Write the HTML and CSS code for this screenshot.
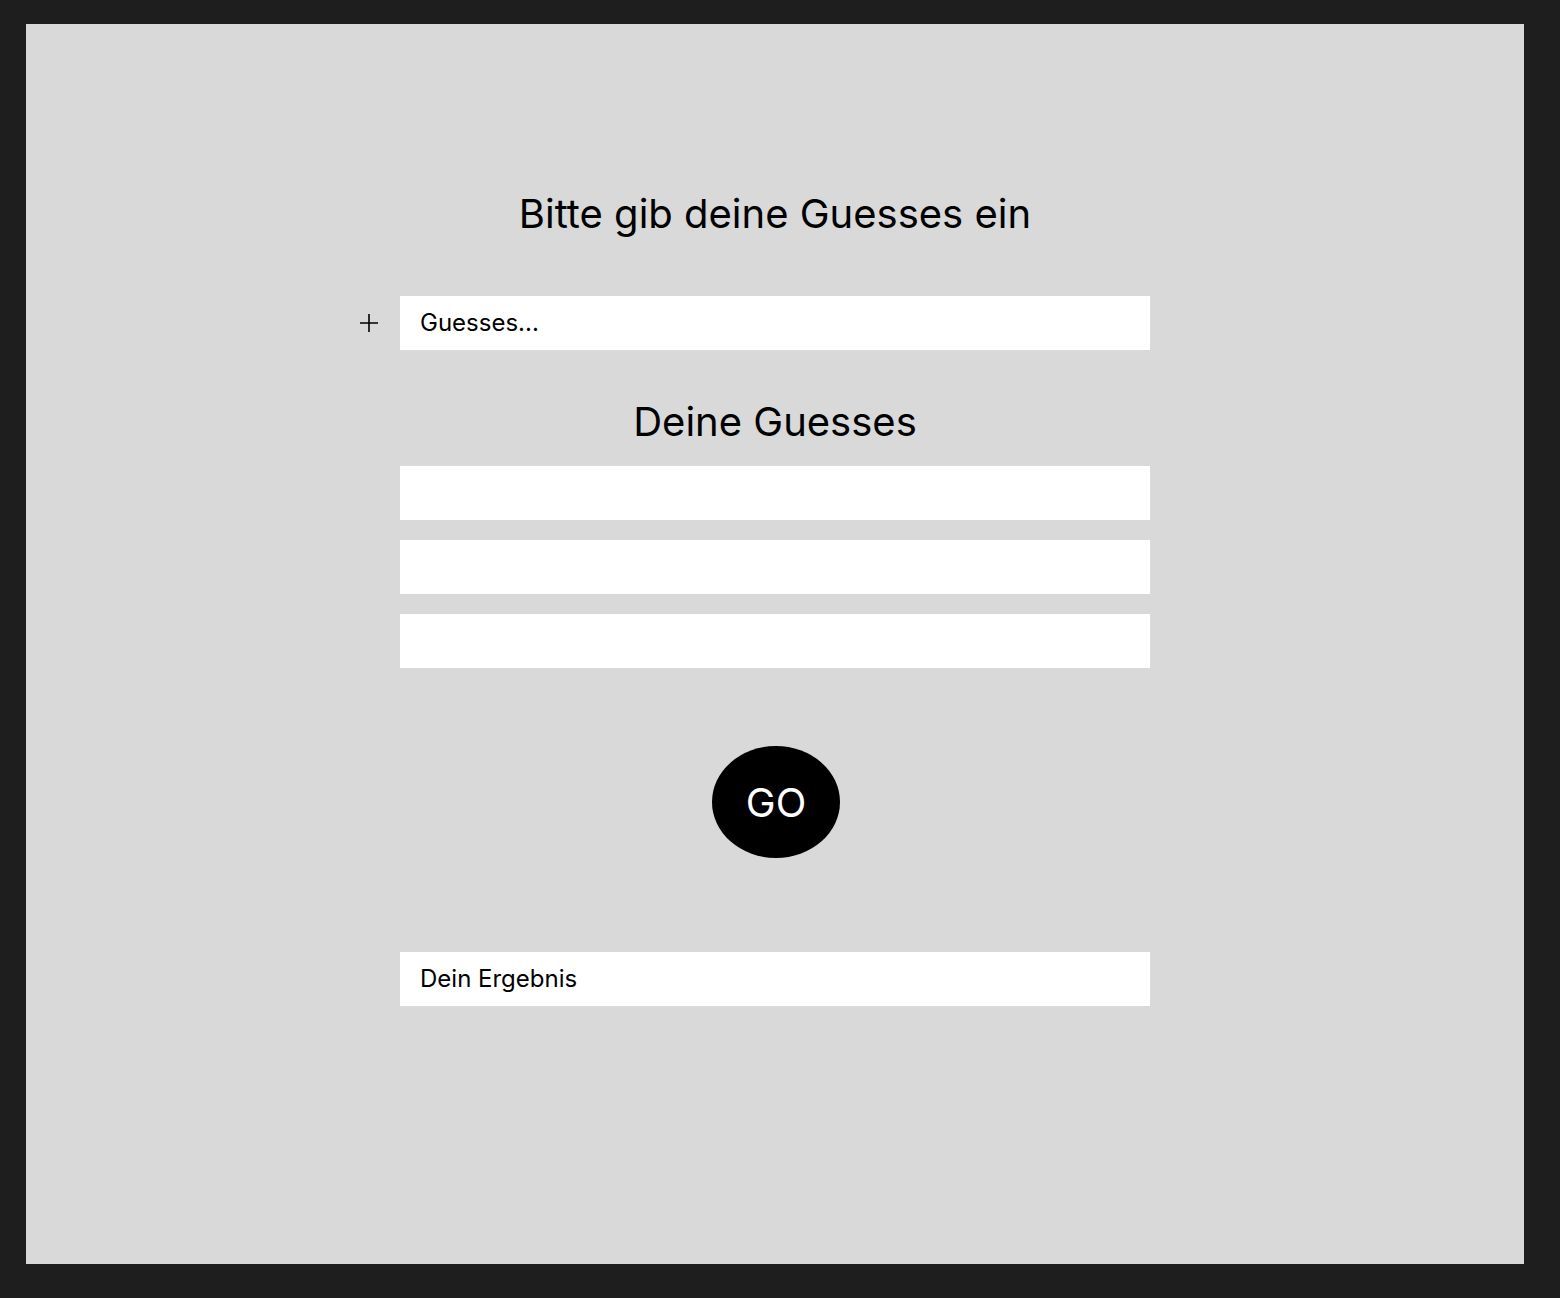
FILE: index.html
```html
<!DOCTYPE html>
<html lang="de">
<head>
<meta charset="utf-8">
<title>Guesses</title>
<link rel="stylesheet" href="styles.css">
</head>
<body>
<main class="frame">
  <h1 class="title">Bitte gib deine Guesses ein</h1>
  <div class="entry">
    <button class="add" aria-label="Hinzufügen">
      <svg width="20" height="20" viewBox="0 0 20 20"><path d="M10 1v18M1 10h18" stroke="#000" stroke-width="1.6" fill="none"/></svg>
    </button>
    <div class="field">Guesses...</div>
  </div>
  <h2 class="subtitle">Deine Guesses</h2>
  <div class="list">
    <div class="field"></div>
    <div class="field"></div>
    <div class="field"></div>
  </div>
  <button class="go">GO</button>
  <div class="field result">Dein Ergebnis</div>
</main>
</body>
</html>
```
FILE: styles.css
```css
html, body {
  margin: 0;
  padding: 0;
  background: #1e1e1e;
}
body {
  padding: 24px 36px 34px 26px;
  font-family: Inter, "Noto Sans", sans-serif;
  color: #000;
}
.frame {
  width: 1498px;
  height: 1240px;
  box-sizing: border-box;
  background: #d9d9d9;
  display: flex;
  flex-direction: column;
  align-items: center;
  padding-top: 166px;
}
.title {
  margin: 0;
  font-weight: 400;
  font-size: 40px;
  line-height: 48px;
  height: 48px;
}
.entry {
  margin-top: 58px;
  position: relative;
  width: 750px;
}
.add {
  position: absolute;
  left: -41px;
  top: 17px;
  width: 20px;
  height: 20px;
  padding: 0;
  border: 0;
  background: none;
  display: flex;
}
.field {
  width: 750px;
  height: 54px;
  box-sizing: border-box;
  background: #fff;
  padding: 0 20px;
  display: flex;
  align-items: center;
  font-size: 24px;
  line-height: 28px;
}
.subtitle {
  margin: 48px 0 0;
  font-weight: 400;
  font-size: 40px;
  line-height: 48px;
  height: 48px;
}
.list {
  margin-top: 20px;
  display: flex;
  flex-direction: column;
  gap: 20px;
}
.go {
  margin-top: 78px;
  margin-left: 2px;
  width: 128px;
  height: 112px;
  border-radius: 50%;
  border: 0;
  background: #000;
  color: #fff;
  font-family: Inter, "Noto Sans", sans-serif;
  font-size: 40px;
  padding: 0;
}
.result {
  margin-top: 94px;
}
```
